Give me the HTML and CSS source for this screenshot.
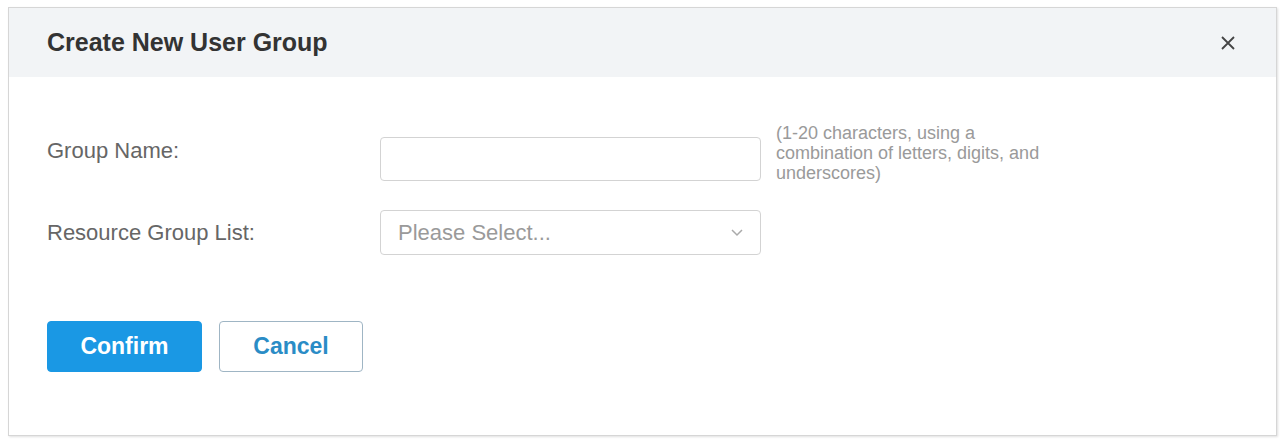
FILE: index.html
```html
<!DOCTYPE html>
<html lang="en">
<head>
<meta charset="utf-8">
<title>Create New User Group</title>
<link rel="stylesheet" href="styles.css">
</head>
<body>
<div class="dialog">
  <div class="dialog-header">
    <h1 class="dialog-title">Create New User Group</h1>
    <button class="close-btn" aria-label="Close">
      <svg width="16" height="16" viewBox="0 0 16 16"><path d="M2 2 L14 14 M14 2 L2 14" stroke="#444" stroke-width="1.8" fill="none"/></svg>
    </button>
  </div>
  <div class="dialog-body">
    <div class="form-row">
      <label class="form-label">Group Name:</label>
      <div class="field"><input class="text-input" type="text"></div>
      <div class="hint">(1-20 characters, using a<br>combination of letters, digits, and<br>underscores)</div>
    </div>
    <div class="form-row row-select">
      <label class="form-label">Resource Group List:</label>
      <div class="field">
        <div class="select">
          <span class="placeholder">Please Select...</span>
          <svg class="chevron" width="14" height="9" viewBox="0 0 14 9"><path d="M2 2 L7 7 L12 2" stroke="#aaa" stroke-width="1.5" fill="none"/></svg>
        </div>
      </div>
    </div>
    <div class="actions">
      <button class="btn btn-primary">Confirm</button>
      <button class="btn btn-default">Cancel</button>
    </div>
  </div>
</div>
</body>
</html>
```
FILE: styles.css
```css
html, body {
  margin: 0;
  padding: 0;
  background: #ffffff;
}
body {
  padding: 7px 5px 4px 8px;
  font-family: "Liberation Sans", Arial, sans-serif;
}
.dialog {
  border: 1px solid #d6d6d6;
  box-shadow: 1px 1px 2px rgba(0,0,0,0.12);
  height: 427px;
  background: #fff;
  display: flex;
  flex-direction: column;
}
.dialog-header {
  height: 69px;
  background: #f2f4f6;
  display: flex;
  align-items: center;
  justify-content: space-between;
  padding: 0 40px 0 38px;
}
.dialog-title {
  margin: 0;
  font-size: 25px;
  font-weight: bold;
  color: #333;
}
.close-btn {
  border: 0;
  background: transparent;
  padding: 0;
  width: 16px;
  height: 16px;
  display: flex;
}
.dialog-body {
  padding: 60px 38px 0 38px;
}
.form-row {
  display: grid;
  grid-template-columns: 333px 381px auto;
  align-items: start;
}
.row-select {
  margin-top: 27px;
  align-items: center;
}
.form-label {
  font-size: 22px;
  color: #666;
  line-height: 26px;
  padding-top: 1px;
}
.row-select .form-label {
  padding-top: 0;
}
.text-input {
  box-sizing: border-box;
  width: 381px;
  height: 44px;
  border: 1px solid #d3d3d3;
  border-radius: 4px;
  margin: 0;
  display: block;
  font-family: inherit;
}
.select {
  box-sizing: border-box;
  width: 381px;
  height: 45px;
  border: 1px solid #d3d3d3;
  border-radius: 4px;
  display: flex;
  align-items: center;
  justify-content: space-between;
  padding: 0 16px 0 17px;
}
.placeholder {
  font-size: 22px;
  color: #9a9a9a;
}
.hint {
  font-size: 18px;
  line-height: 20px;
  color: #9a9a9a;
  margin: -14px 0 0 15px;
}
.actions {
  display: flex;
  gap: 17px;
  margin-top: 66px;
}
.btn {
  height: 51px;
  border-radius: 4px;
  font-family: inherit;
  font-size: 23px;
  font-weight: bold;
  cursor: pointer;
}
.btn-primary {
  width: 155px;
  background: #1a98e4;
  border: 1px solid #1a98e4;
  color: #fff;
}
.btn-default {
  width: 144px;
  background: #fff;
  border: 1px solid #9fb5c4;
  color: #2a8cc6;
}
```
